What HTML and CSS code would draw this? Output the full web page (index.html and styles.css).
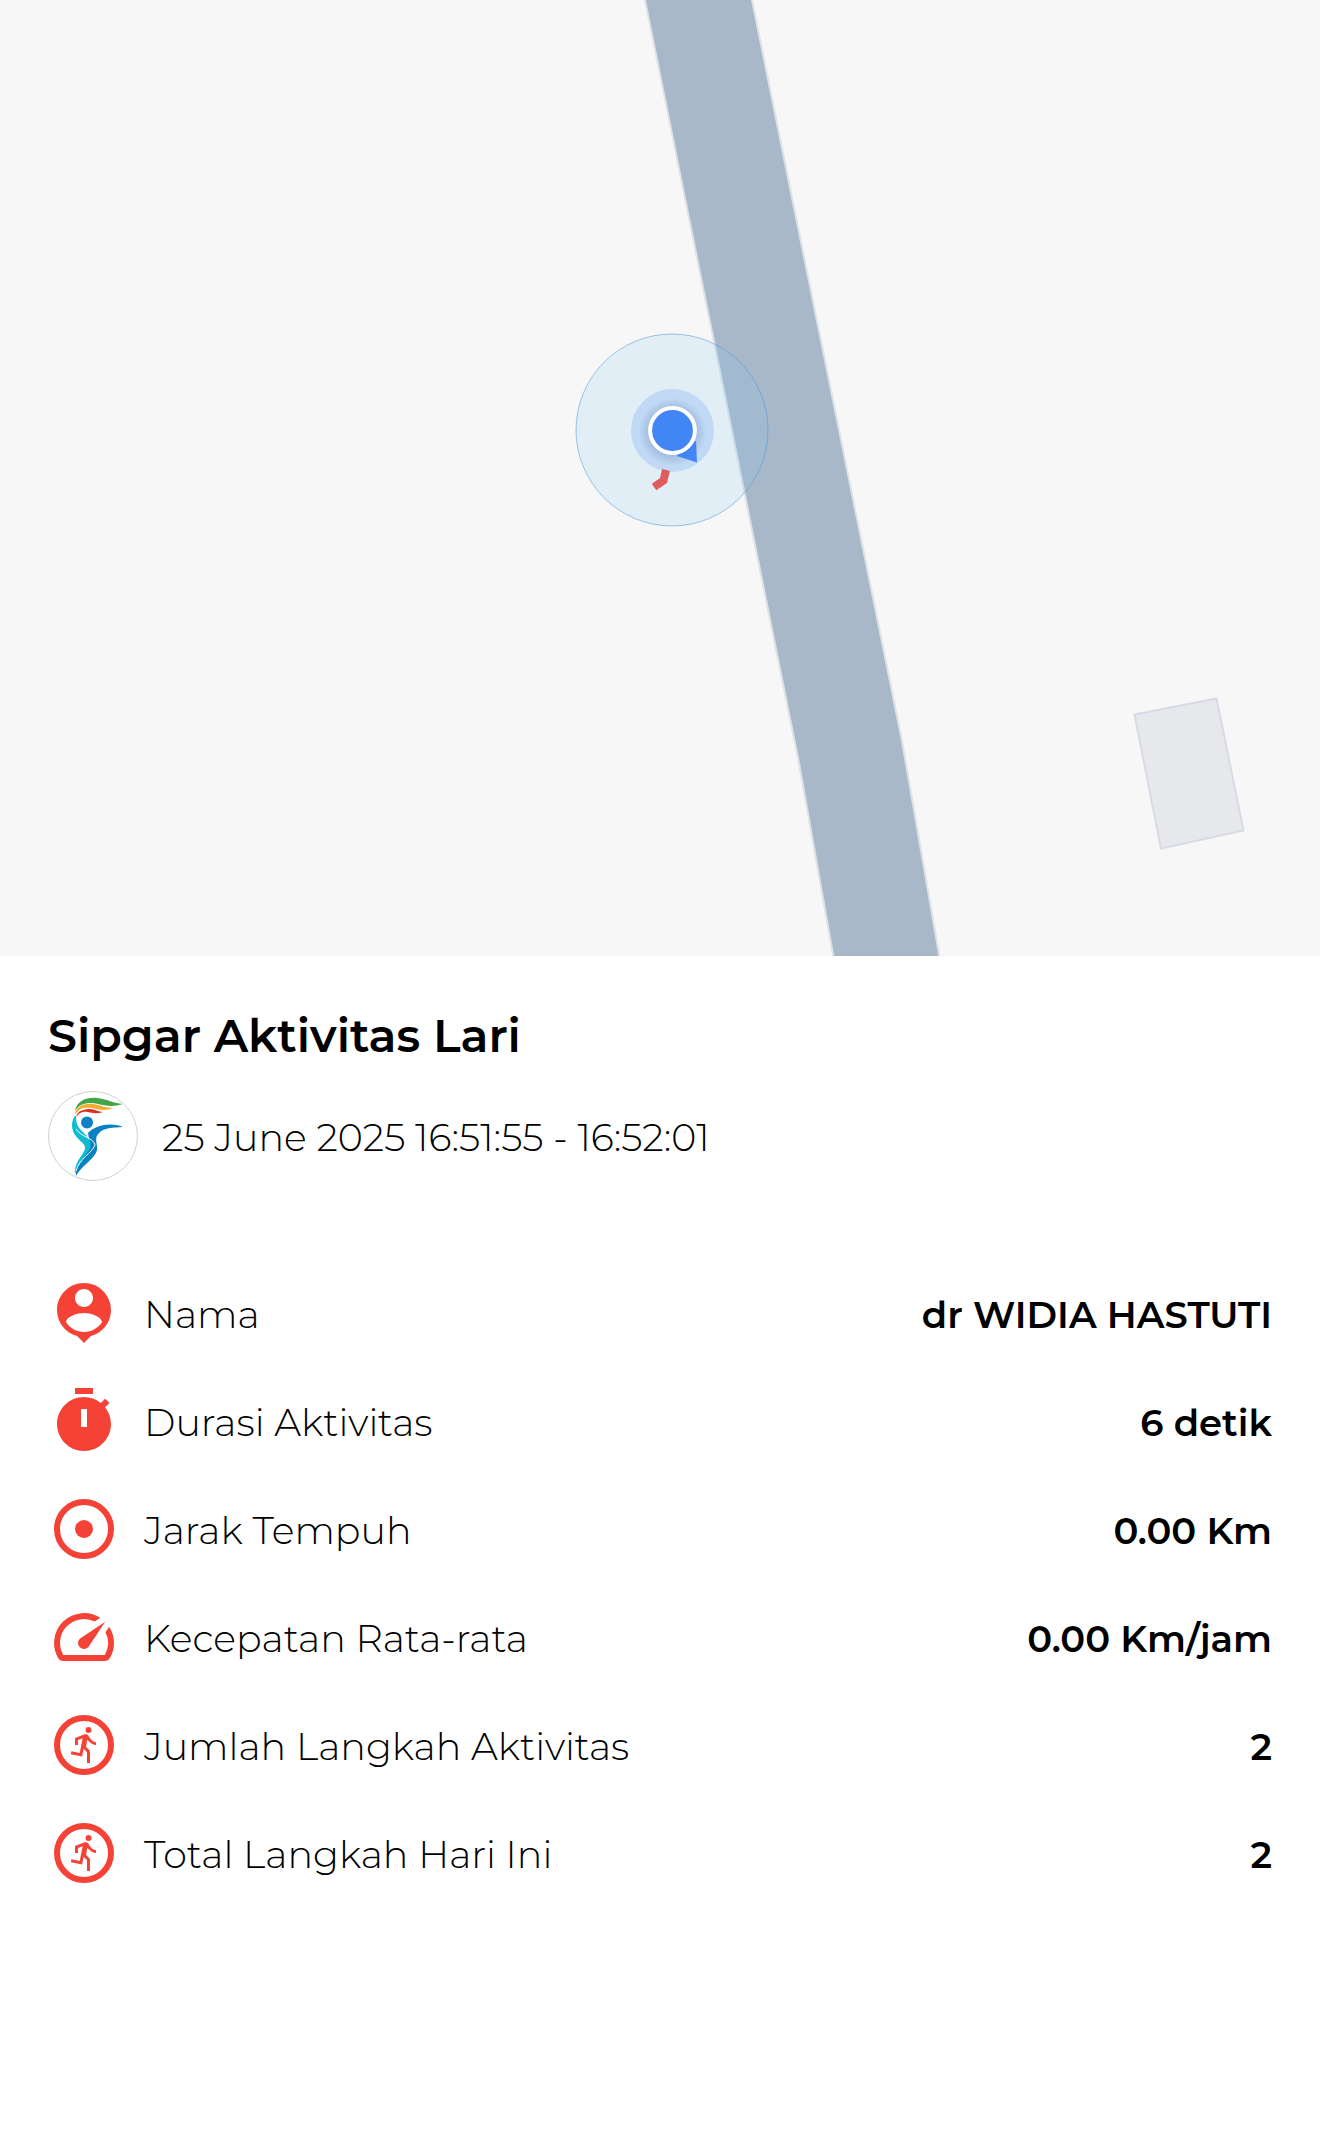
FILE: index.html
```html
<!DOCTYPE html>
<html lang="id">
<head>
  <meta charset="utf-8">
  <meta name="viewport" content="width=device-width, initial-scale=1">
  <title>Sipgar Aktivitas Lari</title>
  <link rel="stylesheet" href="styles.css">
</head>
<body>
  <svg class="map" viewBox="0 0 1320 956" role="img" aria-label="Peta lokasi">
    <defs>
      <radialGradient id="dot-shadow">
        <stop offset="0.6" stop-color="#5f7fb8" stop-opacity="0.4"/>
        <stop offset="1" stop-color="#5f7fb8" stop-opacity="0"/>
      </radialGradient>
    </defs>
    <path class="road" d="M644 -5H751L902 741L940 960H834L799 763Z"/>
    <path class="building" d="M1134.500 714.500L1216.500 698.500L1243.500 830.500L1161 848.500Z"/>
    <circle class="accuracy" cx="672" cy="430" r="96"/>
    <circle class="halo" cx="672.500" cy="430.500" r="41.500"/>
    <path class="track" d="M666 470L663.500 480.500L654 487"/>
    <circle cx="672.500" cy="432" r="34" fill="url(#dot-shadow)"/>
    <path class="heading" d="M697 462.500L677 456L684 444L696 441Z"/>
    <circle class="dot" cx="672.500" cy="430.500" r="22.400"/>
  </svg>

  <main class="details">
    <h1 class="title">Sipgar Aktivitas Lari</h1>
    <div class="meta">
      <svg class="logo" viewBox="0 0 90 90" aria-hidden="true">
        <circle cx="45" cy="45" r="44.500" fill="#fff" stroke="#c4c4c4" stroke-width="0.800"/>
        <path fill="#43a547" d="M27 20C29 10 38 6 49 7C59 8 64 12 75 13C66 16 58 15 50 13C41 11 32 12 27 20Z"/>
        <path fill="#f5ab2c" d="M27 24C28 15 36 12 45 13C53 14 57 17 65 17C58 20 51 19 44 17C36 16 31 17 27 24Z"/>
        <path fill="#df2d2a" d="M28 26C29 20 36 18 42 18C47 18 50 21 55 21C49 23 44 22 40 21C34 20 31 22 28 26Z"/>
        <circle cx="39" cy="31.500" r="6" fill="#0b80c3"/>
        <path fill="#0b80c3" d="M40 42C48 34 62 31 75 36C65 37 56 36 50 43C46 48 50 54 49 59C47 68 34 74 28 85C27 75 33 67 38 58C42 51 41 47 40 42Z"/>
        <path fill="#0ebbd1" d="M27 25C23 30 23 38 27 44C31 50 37 52 37 57C37 63 26 70 27 83C30 73 38 65 42 57C44 51 40 46 35 41C29 36 28 31 28 25Z"/>
        <path fill="none" stroke="#fff" d="M28 38C33 46 46 47 47 54C44 62 31 68 28 80"/>
      </svg>
      <p class="time text">25 June 2025 16:51:55 - 16:52:01</p>
    </div>

    <dl class="stats">
      <div class="row">
        <dt class="label">
          <svg class="icon" viewBox="0 0 24 24" aria-hidden="true"><path fill-rule="evenodd" d="M12 2C7.030 2 3 6.030 3 11c0 4.170 2.830 7.670 6.690 8.690L12 22l2.310-2.310C18.170 18.670 21 15.170 21 11c0-4.970-4.030-9-9-9zm0 2c1.660 0 3 1.340 3 3s-1.340 3-3 3-3-1.340-3-3 1.340-3 3-3zm0 14.300c-2.500 0-4.710-1.280-6-3.220C6.030 13.090 10 12 12 12c1.990 0 5.970 1.090 6 3.080-1.290 1.940-3.500 3.220-6 3.220z"/></svg>
          <span class="text">Nama</span>
        </dt>
        <dd class="value text">dr WIDIA HASTUTI</dd>
      </div>
      <div class="row">
        <dt class="label">
          <svg class="icon" viewBox="0 0 24 24" aria-hidden="true"><path fill-rule="evenodd" d="M15 1H9v2h6V1zm-4 13h2V8h-2v6zm8.030-6.610l1.420-1.420c-.43-.51-.9-.99-1.410-1.410l-1.420 1.420C16.070 4.740 14.120 4 12 4c-4.970 0-9 4.030-9 9s4.020 9 9 9 9-4.030 9-9c0-2.120-.74-4.070-1.970-5.610z"/></svg>
          <span class="text">Durasi Aktivitas</span>
        </dt>
        <dd class="value text">6 detik</dd>
      </div>
      <div class="row">
        <dt class="label">
          <svg class="icon" viewBox="0 0 24 24" aria-hidden="true"><circle class="ring" cx="12" cy="12" r="9"/><circle cx="12" cy="12" r="3"/></svg>
          <span class="text">Jarak Tempuh</span>
        </dt>
        <dd class="value text">0.00 Km</dd>
      </div>
      <div class="row">
        <dt class="label">
          <svg class="icon" viewBox="0 0 24 24" aria-hidden="true"><path d="M20.380 8.570l-1.230 1.850a8 8 0 0 1-.22 7.580H5.070A8 8 0 0 1 15.580 6.850l1.850-1.230A10 10 0 0 0 3.350 19a2 2 0 0 0 1.720 1h13.850a2 2 0 0 0 1.740-1 10 10 0 0 0-.27-10.440zm-9.790 6.840a2 2 0 0 0 2.830 0l5.660-8.490-8.490 5.660a2 2 0 0 0 0 2.830z"/></svg>
          <span class="text">Kecepatan Rata-rata</span>
        </dt>
        <dd class="value text">0.00 Km/jam</dd>
      </div>
      <div class="row">
        <dt class="label">
          <svg class="icon" viewBox="0 0 24 24" aria-hidden="true"><circle class="ring" cx="12" cy="12" r="9"/><circle cx="13.500" cy="7" r="1"/><path d="M16 12c-.7 0-2.010-.54-2.910-1.760l-.41 2.350L14 14.030V18h-1v-3.580l-1.110-1.210-.52 2.640-3.770-.77.2-.98 2.780.57.960-4.890-1.540.57V12H9V9.650l3.280-1.210c.49-.18 1.030.06 1.260.53C14.370 10.670 15.590 11 16 11v1z"/></svg>
          <span class="text">Jumlah Langkah Aktivitas</span>
        </dt>
        <dd class="value text">2</dd>
      </div>
      <div class="row">
        <dt class="label">
          <svg class="icon" viewBox="0 0 24 24" aria-hidden="true"><circle class="ring" cx="12" cy="12" r="9"/><circle cx="13.500" cy="7" r="1"/><path d="M16 12c-.7 0-2.010-.54-2.910-1.760l-.41 2.350L14 14.030V18h-1v-3.580l-1.110-1.210-.52 2.640-3.770-.77.2-.98 2.780.57.960-4.890-1.540.57V12H9V9.650l3.280-1.210c.49-.18 1.030.06 1.260.53C14.370 10.670 15.590 11 16 11v1z"/></svg>
          <span class="text">Total Langkah Hari Ini</span>
        </dt>
        <dd class="value text">2</dd>
      </div>
    </dl>
  </main>
</body>
</html>
```
FILE: styles.css
```css
* {
  box-sizing: border-box;
}

body {
  margin: 0;
  background: #fff;
  color: #000;
  font-family: Montserrat, Inter, sans-serif;
  font-size: 38px;
  font-weight: 300;
  line-height: 48px;
}

/* Map */
.map {
  display: block;
  width: 100%;
  height: auto;
  background: #f7f7f7;
}

.road {
  fill: #a9b8c9;
  stroke: #dde2e7;
  stroke-width: 2px;
}

.building {
  fill: #e7e8ec;
  stroke: #d8dae7;
  stroke-width: 2px;
}

.track {
  fill: none;
  stroke: #e05d5d;
  stroke-width: 8px;
}

.accuracy {
  fill: rgb(135 200 245 / 18%);
  stroke: rgb(70 145 215 / 50%);
  stroke-width: 1px;
}

.halo {
  fill: rgb(66 133 244 / 20%);
}

.heading {
  fill: #4285f4;
}

.dot {
  fill: #4285f4;
  stroke: #fff;
  stroke-width: 4px;
}

/* Activity details */
.details {
  padding: 52px 48px 96px;
}

.title {
  margin: 0;
  font-size: 46px;
  font-weight: 600;
  line-height: 56px;
}

.meta {
  display: flex;
  align-items: center;
  gap: 24px;
  margin-top: 27px;
}

.logo {
  flex: none;
  width: 90px;
  height: 90px;
}

.time {
  margin: 0;
}

/* Optical centring against the icons */
.text {
  padding-top: 3px;
}

.stats {
  display: flex;
  flex-direction: column;
  gap: 36px;
  margin: 96px 0 0;
}

.row {
  display: flex;
  align-items: center;
  justify-content: space-between;
  gap: 24px;
}

.label {
  display: flex;
  align-items: center;
  gap: 24px;
}

.icon {
  flex: none;
  width: 72px;
  height: 72px;
  fill: #f44336;
}

.ring {
  fill: none;
  stroke: #f44336;
  stroke-width: 2px;
}

.value {
  margin: 0;
  font-size: 37px;
  font-weight: 600;
  text-align: right;
}
```
